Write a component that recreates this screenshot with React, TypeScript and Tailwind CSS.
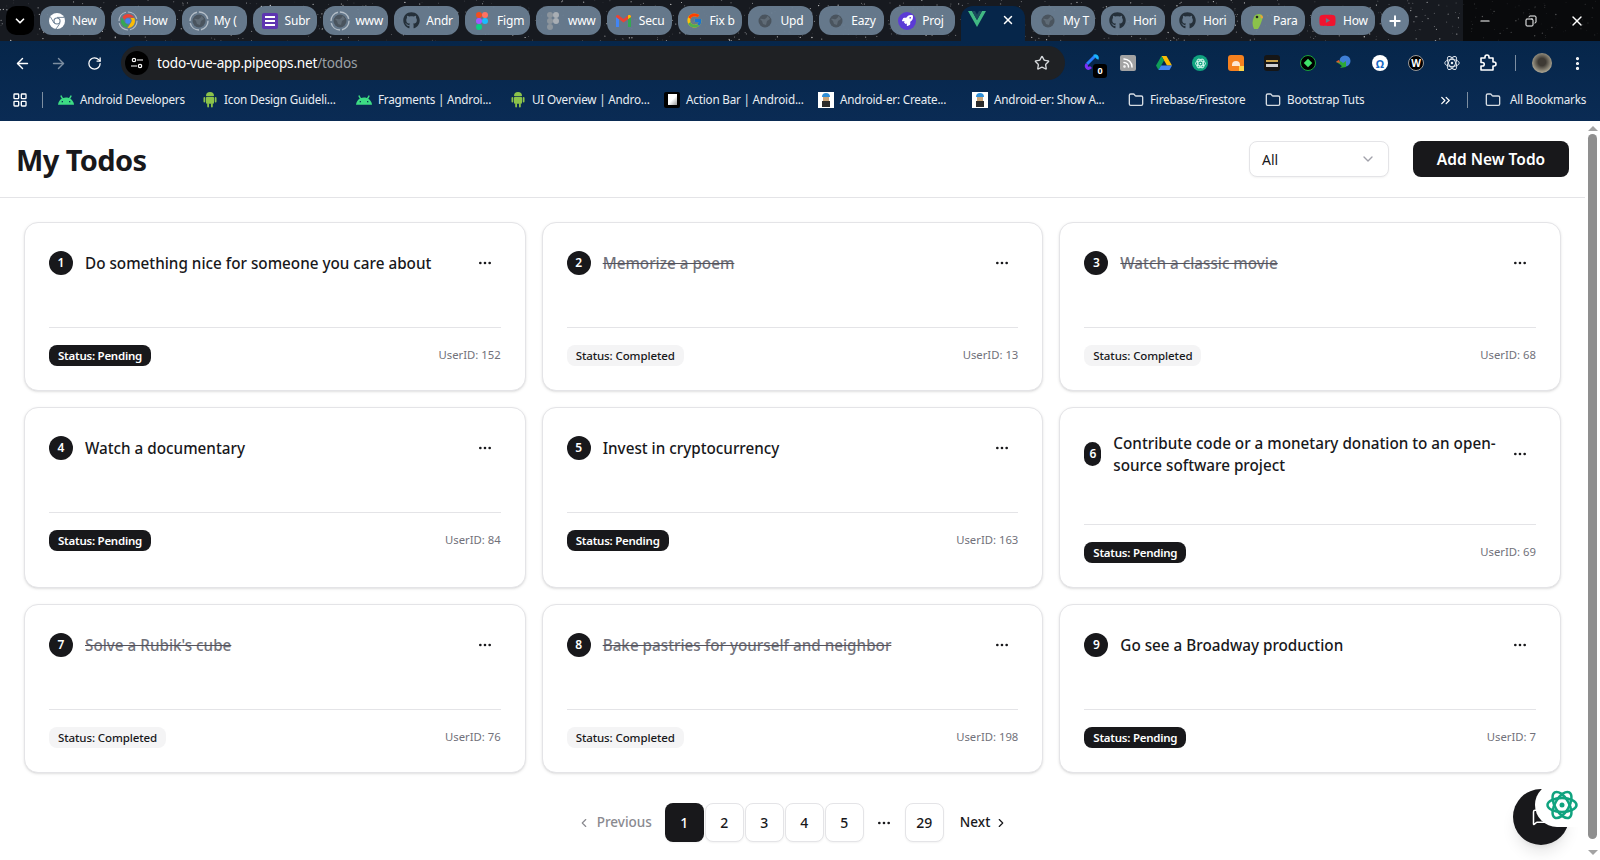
import type { ReactNode } from "react";
import {
  ArrowLeft,
  ArrowRight,
  ChevronDown,
  ChevronLeft,
  ChevronRight,
  ChevronsRight,
  Copy,
  Ellipsis,
  EllipsisVertical,
  Folder,
  LayoutGrid,
  MessageSquare,
  Minus,
  Plus,
  RotateCw,
  Rss,
  Star,
  X,
} from "lucide-react";
import { FaGithub, FaRocket, FaYoutube } from "react-icons/fa";
import { FcGoogle } from "react-icons/fc";
import { SiAndroid } from "react-icons/si";

// star field behind the tab strip
let seed = 17;
const rnd = () => {
  seed = (seed * 16807) % 2147483647;
  return seed / 2147483647;
};
const stars = Array.from({ length: 900 }, () => ({
  x: rnd() * 1600,
  y: rnd() * 41,
  r: 0.25 + rnd() * 0.45,
  o: 0.25 + rnd() * 0.6,
}));

function Starfield() {
  return (
    <svg className="absolute inset-0" width="1600" height="41">
      {stars.map((s, i) => (
        <circle key={i} cx={s.x} cy={s.y} r={s.r} fill="#fff" opacity={s.o} />
      ))}
    </svg>
  );
}

function GlobeIcon({ ring }: { ring?: boolean }) {
  return (
    <svg width="20" height="20" viewBox="0 0 20 20">
      {ring && <circle cx="10" cy="10" r="9" fill="none" stroke="#b4bec8" strokeWidth="1.4" strokeDasharray="12 2" />}
      <circle cx="10" cy="10" r="6.5" fill="#4a545e" />
      <path d="M5 8c2-1 3 1 5 0s2-3 3-3l2 3-3 2-1 4-3-1-1-3z" fill="#5f6b76" />
    </svg>
  );
}

function ChromeColor() {
  return (
    <svg width="20" height="20" viewBox="0 0 20 20">
      <circle cx="10" cy="10" r="9" fill="none" stroke="#b4bec8" strokeWidth="1.2" strokeDasharray="12 2" />
      <path d="M10 3a7 7 0 0 1 6.1 3.5H10a3.5 3.5 0 0 0-3.3 2.3L4.4 5.9A7 7 0 0 1 10 3z" fill="#ea4335" />
      <path d="M3.9 6.5 7 11.8a3.5 3.5 0 0 0 3 1.7L8.4 16.8A7 7 0 0 1 3.9 6.5z" fill="#34a853" />
      <path d="M16.3 7H12.5a3.5 3.5 0 0 1 .5 4.5L9.5 17A7 7 0 0 0 16.3 7z" fill="#fbbc05" />
      <circle cx="10" cy="10" r="2.7" fill="#4285f4" />
    </svg>
  );
}

function ChromeWhite() {
  return (
    <svg width="16" height="16" viewBox="0 0 16 16">
      <circle cx="8" cy="8" r="8" fill="#fff" />
      <circle cx="8" cy="8" r="3.6" fill="#697d91" />
      <circle cx="8" cy="8" r="2.5" fill="#fff" />
      <path d="M8 4.4h7M5 10 1.5 4M10.8 10.5 7 16" stroke="#697d91" strokeWidth="0.9" />
    </svg>
  );
}

function FormsIcon() {
  return (
    <div className="flex h-4 w-4 flex-col justify-center gap-[2px] rounded-[2px] bg-[#5e35b1] px-[3px]">
      <div className="h-[2px] bg-white" />
      <div className="h-[2px] bg-white" />
      <div className="h-[2px] bg-white" />
    </div>
  );
}

function FigmaIcon({ gray }: { gray?: boolean }) {
  return (
    <svg width="12" height="18" viewBox="0 0 12 18">
      <circle cx="3" cy="3" r="3" fill={gray ? "#8c959d" : "#f24e1e"} />
      <circle cx="9" cy="3" r="3" fill={gray ? "#a8aeb4" : "#ff7262"} />
      <circle cx="3" cy="9" r="3" fill={gray ? "#8c959d" : "#a259ff"} />
      <circle cx="9" cy="9" r="3" fill={gray ? "#a8aeb4" : "#1abcfe"} />
      <circle cx="3" cy="15" r="3" fill={gray ? "#8c959d" : "#0acf83"} />
    </svg>
  );
}

function GmailIcon() {
  return (
    <svg width="17" height="14" viewBox="0 0 17 14">
      <path d="M1 13V3l3 2v8z" fill="#4285f4" />
      <path d="M13 13V5l3-2v10z" fill="#34a853" />
      <path d="M1 3c0-2 2-2.5 3-1.5L8.5 5 13 1.5c1-1 3-.5 3 1.5L8.5 8.5z" fill="#ea4335" />
      <path d="M13 1.5c1-1 3-.5 3 1.5l-3 2z" fill="#fbbc05" />
    </svg>
  );
}

function RocketIcon() {
  return (
    <div className="flex h-[18px] w-[18px] items-center justify-center rounded-full bg-[#5b3bd6]">
      <FaRocket className="text-white" size={11} />
    </div>
  );
}

function VueIcon() {
  return (
    <svg width="18" height="16" viewBox="0 0 18 16">
      <path d="M0 0h4l5 9 5-9h4L9 16z" fill="#41b883" />
      <path d="M4 0h3l2 3.5L11 0h3L9 9z" fill="#1b4a5c" />
    </svg>
  );
}

function ParrotIcon() {
  return (
    <svg width="16" height="18" viewBox="0 0 16 18">
      <path d="M4 17c-2-4-2-8 0-12 1-3 6-4 8-2 1 1 1 3 0 5-1 3-2 6-4 9z" fill="#8bc34a" />
      <circle cx="7" cy="5" r="1.3" fill="#222" />
      <path d="M10 3c2 0 3 1 3 3l-2 .5z" fill="#e9a23b" />
    </svg>
  );
}

type TabData = { icon: ReactNode; label: string; active?: boolean };

const tabs: TabData[] = [
  { icon: <ChromeWhite />, label: "New" },
  { icon: <ChromeColor />, label: "How" },
  { icon: <GlobeIcon ring />, label: "My (" },
  { icon: <FormsIcon />, label: "Subr" },
  { icon: <GlobeIcon ring />, label: "www" },
  { icon: <FaGithub size={17} className="text-[#25303a]" />, label: "Andr" },
  { icon: <FigmaIcon />, label: "Figm" },
  { icon: <FigmaIcon gray />, label: "www" },
  { icon: <GmailIcon />, label: "Secu" },
  { icon: <FcGoogle size={17} />, label: "Fix b" },
  { icon: <GlobeIcon />, label: "Upd" },
  { icon: <GlobeIcon />, label: "Eazy" },
  { icon: <RocketIcon />, label: "Proj" },
  { icon: <VueIcon />, label: "", active: true },
  { icon: <GlobeIcon />, label: "My T" },
  { icon: <FaGithub size={17} className="text-[#25303a]" />, label: "Hori" },
  { icon: <FaGithub size={17} className="text-[#25303a]" />, label: "Hori" },
  { icon: <ParrotIcon />, label: "Para" },
  { icon: <FaYoutube size={17} className="text-[#f0142f]" />, label: "How" },
];

function Tab({ tab, narrow }: { tab: TabData; narrow: boolean }) {
  if (tab.active) {
    return (
      <div className="flex h-[35px] w-[64px] shrink-0 items-start justify-between self-start rounded-t-[12px] bg-[#06264a] pl-[7px] pr-[10px] pt-[5px]">
        <VueIcon />
        <X size={14} className="mt-[2px] text-white" strokeWidth={2.5} />
      </div>
    );
  }
  return (
    <div
      className={`flex h-[29px] shrink-0 items-center gap-[5px] overflow-hidden rounded-[12px] bg-[#697d91]/95 pl-[7px] ${
        narrow ? "w-[64px]" : "w-[64.85px]"
      }`}
    >
      <div className="flex w-5 shrink-0 justify-center">{tab.icon}</div>
      <span className="whitespace-nowrap text-[12px] tracking-[-0.2px] text-white">{tab.label}</span>
    </div>
  );
}

function TabStrip() {
  return (
    <div className="relative h-[41px] shrink-0 overflow-hidden bg-[#171a20]">
      <Starfield />
      <div className="absolute inset-y-0 right-0 w-[137px] bg-black/60" />
      <div className="relative flex h-full items-start pt-[6px]">
        <div className="ml-[6px] mr-[6px] flex h-[29px] w-[28px] shrink-0 items-center justify-center rounded-[10px] bg-black">
          <ChevronDown size={14} strokeWidth={3} className="text-white" />
        </div>
        <div className="flex gap-[6px]">
          {tabs.map((t, i) => (
            <Tab key={i} tab={t} narrow={i > 13} />
          ))}
          <div className="flex h-[29px] w-[28px] shrink-0 items-center justify-center rounded-full bg-[#697d91]">
            <Plus size={16} strokeWidth={3} className="text-white" />
          </div>
        </div>
        <div className="ml-auto flex h-[29px] items-center text-white">
          <div className="flex w-[46px] justify-center">
            <Minus size={14} />
          </div>
          <div className="flex w-[46px] justify-center">
            <Copy size={12} className="-scale-x-100" />
          </div>
          <div className="flex w-[46px] justify-center">
            <X size={16} strokeWidth={2} />
          </div>
        </div>
      </div>
    </div>
  );
}

function TuneIcon() {
  return (
    <svg width="12" height="12" viewBox="0 0 12 12" fill="none" stroke="#fff" strokeWidth="1.2">
      <circle cx="3" cy="3" r="1.7" />
      <path d="M6 3h6M0 9h6" />
      <circle cx="9" cy="9" r="1.7" />
    </svg>
  );
}

function AtomGlyph({ size, color, strokeWidth }: { size: number; color: string; strokeWidth: number }) {
  return (
    <svg width={size} height={size} viewBox="0 0 32 32" fill="none" stroke={color} strokeWidth={strokeWidth}>
      <ellipse cx="16" cy="16" rx="14.5" ry="7" />
      <ellipse cx="16" cy="16" rx="14.5" ry="7" transform="rotate(60 16 16)" />
      <ellipse cx="16" cy="16" rx="14.5" ry="7" transform="rotate(120 16 16)" />
      <circle cx="16" cy="16" r="2.5" fill={color} stroke="none" />
    </svg>
  );
}

function DriveIcon() {
  return (
    <svg width="16" height="15" viewBox="0 0 16 15">
      <path d="M5.5 0h5L16 9.5h-5z" fill="#fbbc04" />
      <path d="M5.5 0 0 9.5 2.5 14 8 4.5z" fill="#0f9d58" />
      <path d="M2.5 14h11L16 9.5H5z" fill="#4285f4" />
    </svg>
  );
}

function ExtSlot({ children }: { children: ReactNode }) {
  return <div className="relative flex h-9 w-9 shrink-0 items-center justify-center">{children}</div>;
}

function PuzzleIcon() {
  return (
    <svg width="18" height="18" viewBox="0 0 18 18" fill="none" stroke="#fff" strokeWidth="1.6" strokeLinejoin="round">
      <path d="M2 4h4V3a2 2 0 0 1 4 0v1h4v4h1a2 2 0 0 1 0 4h-1v4H2v-4h1.5a1.5 1.5 0 0 0 0-3.5H2z" />
    </svg>
  );
}

function Toolbar() {
  return (
    <div className="flex h-[39px] items-center pt-[5px]">
      <div className="flex w-[121px] shrink-0 pl-[4px] text-white">
        <div className="flex h-9 w-9 items-center justify-center">
          <ArrowLeft size={17} />
        </div>
        <div className="flex h-9 w-9 items-center justify-center text-[#7d8ea1]">
          <ArrowRight size={17} />
        </div>
        <div className="flex h-9 w-9 items-center justify-center">
          <RotateCw size={15} />
        </div>
      </div>
      <div className="flex h-[34px] w-[944px] shrink-0 items-center rounded-full bg-[#1f2124] pl-[4px] pr-[15px]">
        <div className="flex h-6 w-6 items-center justify-center rounded-full bg-black">
          <TuneIcon />
        </div>
        <span className="ml-[8px] text-[13.6px] tracking-[-0.2px] text-white">
          todo-vue-app.pipeops.net<span className="text-[#9aa0a6]">/todos</span>
        </span>
        <Star size={16} className="ml-auto text-[#d6d9dc]" />
      </div>
      <div className="ml-[9px] flex items-center">
        <ExtSlot>
          <svg width="16" height="18" viewBox="0 0 16 18" fill="none" strokeWidth="3">
            <path d="M11 2 3 10" stroke="#2a7fff" />
            <path d="M3 10c-2 3 1 6 4 3" stroke="#7b2ff7" />
            <path d="M10 2c2-1 4 1 3 3" stroke="#19b5fe" />
          </svg>
          <div className="absolute bottom-[3px] right-[3px] flex h-[14px] w-[14px] items-center justify-center rounded-[3px] bg-black text-[9px] font-bold text-white">
            0
          </div>
        </ExtSlot>
        <ExtSlot>
          <div className="flex h-4 w-4 items-center justify-center rounded-[2px] bg-[#a3a3a3]">
            <Rss size={12} strokeWidth={3} className="text-white" />
          </div>
        </ExtSlot>
        <ExtSlot>
          <DriveIcon />
        </ExtSlot>
        <ExtSlot>
          <div className="flex h-4 w-4 items-center justify-center rounded-full bg-[#10a37f]">
            <AtomGlyph size={11} color="#e8fff8" strokeWidth={2.5} />
          </div>
        </ExtSlot>
        <ExtSlot>
          <div className="relative flex h-4 w-4 items-center justify-center rounded-[3px] bg-[#f5811f]">
            <div className="h-[5px] w-2 rounded-t-full bg-white/80" />
            <div className="absolute bottom-0 right-0 h-[5px] w-[5px] bg-[#ffd54a]" />
          </div>
        </ExtSlot>
        <ExtSlot>
          <div className="flex h-4 w-4 flex-col items-center justify-center rounded-[3px] bg-[#161616]">
            <div className="h-[2px] w-3 bg-[#c9a24a]" />
            <div className="mt-[2px] h-[3px] w-3 bg-white/80" />
          </div>
        </ExtSlot>
        <ExtSlot>
          <div className="flex h-4 w-4 items-center justify-center rounded-full border border-[#19a33b] bg-black">
            <div className="h-[6px] w-[6px] rotate-45 bg-[#3fe36a]" />
          </div>
        </ExtSlot>
        <ExtSlot>
          <svg width="18" height="16" viewBox="0 0 18 16">
            <circle cx="10" cy="6" r="5.5" fill="#3f7fd6" />
            <path d="M1 7c3-2 5-1 7 1l3-2v6l-6 1 2-2C5 9 3 8 1 7z" fill="#2ea836" />
            <path d="M1 7c1-1 2-2 3-2l1 3z" fill="#e4572e" />
          </svg>
        </ExtSlot>
        <ExtSlot>
          <div className="flex h-4 w-4 items-center justify-center rounded-full bg-white text-[11px] font-bold leading-none text-[#1769c4]">
            Ω
          </div>
        </ExtSlot>
        <ExtSlot>
          <div className="flex h-4 w-4 items-center justify-center rounded-full border border-[#9a9a9a] bg-black text-[10px] font-bold leading-none text-white">
            W
          </div>
        </ExtSlot>
        <ExtSlot>
          <AtomGlyph size={16} color="#e8edf2" strokeWidth={1.8} />
        </ExtSlot>
        <ExtSlot>
          <PuzzleIcon />
        </ExtSlot>
      </div>
      <div className="ml-[9px] h-4 w-px shrink-0 bg-[#7d8ea1]" />
      <div className="ml-[16px] h-5 w-5 shrink-0 rounded-full bg-[radial-gradient(circle_at_50%_45%,#3e3a34_25%,#a8a290_70%)]" />
      <EllipsisVertical size={17} className="ml-[17px] shrink-0 text-white" strokeWidth={2.5} />
    </div>
  );
}

function RobotIcon() {
  return (
    <svg width="16" height="17" viewBox="-1 0 16 17" fill="#8bc34a">
      <path d="M3 5a4 4 0 0 1 8 0z" />
      <rect x="3" y="5.8" width="8" height="7" rx="1" />
      <rect x="0.5" y="6" width="1.8" height="5.5" rx="0.9" />
      <rect x="11.7" y="6" width="1.8" height="5.5" rx="0.9" />
      <rect x="4.2" y="12" width="1.8" height="4.5" rx="0.9" />
      <rect x="8" y="12" width="1.8" height="4.5" rx="0.9" />
    </svg>
  );
}

function ActionBarIcon() {
  return (
    <div className="flex h-4 w-4 items-center justify-center rounded-[2px] bg-black">
      <div className="h-[11px] w-[9px] bg-[linear-gradient(135deg,#fff_50%,#9a9a9a)]" />
    </div>
  );
}

function BloggerIcon() {
  return (
    <div className="flex h-4 w-4 flex-col items-center justify-center bg-white">
      <div className="h-1 w-2 rounded-t-full bg-[#2f8fd8]" />
      <div className="h-[4px] w-[6px] bg-[#c9a67c]" />
      <div className="h-[6px] w-[8px] bg-[#2b2b2b]" />
    </div>
  );
}

const bookmarks: { icon: ReactNode; label: string; width: string }[] = [
  { icon: <SiAndroid size={16} className="text-[#3ddc84]" />, label: "Android Developers", width: "w-[144px]" },
  { icon: <RobotIcon />, label: "Icon Design Guideli...", width: "w-[154px]" },
  { icon: <SiAndroid size={16} className="text-[#3ddc84]" />, label: "Fragments | Androi...", width: "w-[154px]" },
  { icon: <RobotIcon />, label: "UI Overview | Andro...", width: "w-[154px]" },
  { icon: <ActionBarIcon />, label: "Action Bar | Android...", width: "w-[154px]" },
  { icon: <BloggerIcon />, label: "Android-er: Create...", width: "w-[154px]" },
  { icon: <BloggerIcon />, label: "Android-er: Show A...", width: "w-[156px]" },
  { icon: <Folder size={16} className="text-[#d5dbe2]" />, label: "Firebase/Firestore", width: "w-[137px]" },
  { icon: <Folder size={16} className="text-[#d5dbe2]" />, label: "Bootstrap Tuts", width: "w-[173px]" },
];

function BookmarksBar() {
  return (
    <div className="flex h-[41px] items-center whitespace-nowrap pb-[1px] text-[11.7px] tracking-[-0.2px] text-[#e8edf2]">
      <div className="ml-[12px] flex w-[30px] shrink-0">
        <LayoutGrid size={16} className="text-white" />
      </div>
      <div className="h-4 w-px shrink-0 bg-[#7d8ea1]" />
      <div className="ml-[15px] flex">
        {bookmarks.map((b) => (
          <div key={b.label} className={`flex shrink-0 items-center gap-[6px] ${b.width}`}>
            {b.icon}
            <span>{b.label}</span>
          </div>
        ))}
      </div>
      <ChevronsRight size={15} className="shrink-0 text-white" />
      <div className="ml-[14px] h-4 w-px shrink-0 bg-[#7d8ea1]" />
      <div className="ml-[17px] flex shrink-0 items-center gap-[9px]">
        <Folder size={16} className="text-[#d5dbe2]" />
        <span>All Bookmarks</span>
      </div>
    </div>
  );
}

type Todo = { id: number; title: string; done: boolean; user: number };

const todos: Todo[] = [
  { id: 1, title: "Do something nice for someone you care about", done: false, user: 152 },
  { id: 2, title: "Memorize a poem", done: true, user: 13 },
  { id: 3, title: "Watch a classic movie", done: true, user: 68 },
  { id: 4, title: "Watch a documentary", done: false, user: 84 },
  { id: 5, title: "Invest in cryptocurrency", done: false, user: 163 },
  { id: 6, title: "Contribute code or a monetary donation to an open-source software project", done: false, user: 69 },
  { id: 7, title: "Solve a Rubik's cube", done: true, user: 76 },
  { id: 8, title: "Bake pastries for yourself and neighbor", done: true, user: 198 },
  { id: 9, title: "Go see a Broadway production", done: false, user: 7 },
];

function TodoCard({ todo }: { todo: Todo }) {
  return (
    <div className="rounded-[14px] border border-[#e4e4e7] bg-white p-6 shadow-sm">
      <div className="flex min-h-8 items-center gap-3">
        <div
          className={`flex h-6 shrink-0 items-center justify-center rounded-full bg-[#18181b] text-[12px] font-semibold text-white ${
            todo.id === 6 ? "w-[17px]" : "w-6"
          }`}
        >
          {todo.id}
        </div>
        <div
          className={`-mr-[8px] flex-1 text-[15.25px] font-medium leading-[22px] ${
            todo.done ? "text-[#71717a] line-through decoration-[#52525b]" : "text-[#18181b]"
          }`}
        >
          {todo.title}
        </div>
        <div className="flex h-8 w-8 shrink-0 items-center justify-center text-[#18181b]">
          <Ellipsis size={16} />
        </div>
      </div>
      <div className="mt-12 flex items-center justify-between border-t border-[#e4e4e7] pt-[17px]">
        {todo.done ? (
          <span className="rounded-[8px] bg-[#f4f4f5] px-[9px] py-[2px] text-[11.5px] font-medium leading-[17px] tracking-[-0.1px] text-[#18181b]">
            Status: Completed
          </span>
        ) : (
          <span className="rounded-[8px] bg-[#18181b] px-[9px] py-[2px] text-[11.5px] font-semibold leading-[17px] tracking-[-0.25px] text-white">
            Status: Pending
          </span>
        )}
        <span className="text-[11.3px] text-[#71717a]">UserID: {todo.user}</span>
      </div>
    </div>
  );
}

function PageBox({ children, active }: { children: ReactNode; active?: boolean }) {
  return (
    <div
      className={`flex h-[39px] w-[39px] items-center justify-center rounded-[8px] text-[14px] font-medium shadow-xs ${
        active ? "bg-[#18181b] text-white" : "border border-[#e4e4e7] bg-white text-[#18181b]"
      }`}
    >
      {children}
    </div>
  );
}

function Pagination() {
  return (
    <div className="mt-[30px] flex items-center justify-center gap-[1px] text-[13.5px] font-medium text-[#18181b]">
      <div className="mr-[12px] flex items-center gap-[6px] text-[#8a8a90]">
        <ChevronLeft size={14} />
        <span>Previous</span>
      </div>
      <PageBox active>1</PageBox>
      <PageBox>2</PageBox>
      <PageBox>3</PageBox>
      <PageBox>4</PageBox>
      <PageBox>5</PageBox>
      <div className="flex w-[39px] justify-center">
        <Ellipsis size={16} />
      </div>
      <PageBox>29</PageBox>
      <div className="ml-[15px] flex items-center gap-[4px]">
        <span>Next</span>
        <ChevronRight size={14} />
      </div>
    </div>
  );
}

function Scrollbar() {
  return (
    <div className="flex w-[15px] shrink-0 flex-col items-center bg-white">
      <div className="mt-[5px] h-0 w-0 border-x-[5px] border-b-[5px] border-x-transparent border-b-[#a3a3a3]" />
      <div className="mt-[3px] h-[705px] w-[9px] rounded-full bg-[#8f8f8f]" />
      <div className="mt-auto mb-[5px] h-0 w-0 border-x-[5px] border-t-[5px] border-x-transparent border-t-[#a3a3a3]" />
    </div>
  );
}

export default function App() {
  return (
    <div className="flex h-[860px] w-[1600px] flex-col overflow-hidden bg-white font-['Noto_Sans',sans-serif]">
      <TabStrip />
      <div className="shrink-0 bg-[linear-gradient(to_bottom,#06264a,#0a2b54)]">
        <Toolbar />
        <BookmarksBar />
      </div>
      <div className="flex min-h-0 flex-1">
        <div className="relative min-w-0 flex-1 overflow-hidden">
          <header className="flex items-center justify-between border-b border-[#e4e4e7] px-4 py-5">
            <h1 className="pt-[2px] text-[29px] font-bold leading-[34px] tracking-[-0.6px] text-[#18181b]">My Todos</h1>
            <div className="flex items-center gap-6">
              <div className="flex h-9 w-[140px] items-center justify-between rounded-[8px] border border-[#e4e4e7] bg-white px-3 text-[14px] text-[#18181b] shadow-xs">
                All
                <ChevronDown size={16} className="text-[#a1a1aa]" />
              </div>
              <button className="h-9 w-[156px] rounded-[8px] bg-[#18181b] pt-[1px] text-[15.5px] font-semibold text-white">
                Add New Todo
              </button>
            </div>
          </header>
          <main className="p-6">
            <div className="grid grid-cols-3 gap-x-4 gap-y-4">
              {todos.map((t) => (
                <TodoCard key={t.id} todo={t} />
              ))}
            </div>
            <Pagination />
          </main>
          <div className="absolute left-[1513px] top-[668px] flex h-14 w-14 items-center justify-center rounded-full bg-[#18181b] shadow-lg">
            <MessageSquare size={18} className="text-white" />
          </div>
          <div className="absolute right-0 top-[662px] flex h-[44px] w-[50px] items-center rounded-l-[22px] bg-white pl-[11px]">
            <AtomGlyph size={32} color="#10a37f" strokeWidth={2.5} />
          </div>
        </div>
        <Scrollbar />
      </div>
    </div>
  );
}
